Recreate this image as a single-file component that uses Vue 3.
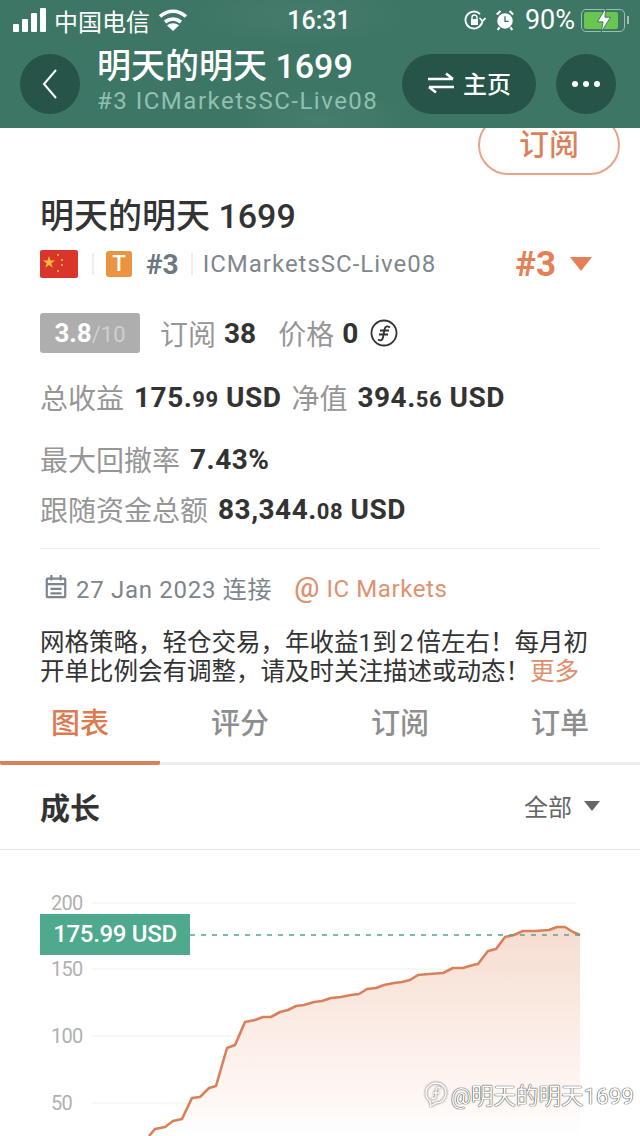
<script setup>
const tabs = ['图表', '评分', '订阅', '订单']
const pts = [[149,1136],[155,1129],[165,1127],[173,1121],[182,1119],[192,1098],[200,1097],[209,1088],[216,1086],[227,1048],[235,1045],[245,1022],[255,1020],[263,1017],[271,1017],[280,1012],[288,1010],[296,1006],[304,1005],[314,1002],[322,1001],[331,998],[341,997],[351,995],[359,994],[367,989],[376,988],[384,985],[394,983],[402,982],[410,980],[418,975],[429,974],[443,973],[453,968],[463,968],[473,965],[478,964],[488,951],[496,949],[505,937],[514,935],[523,931],[535,931],[549,930],[557,927],[565,927],[573,932],[580,935]]
const line = pts.map((p) => p.join(',')).join(' ')
const area = line + ' 580,1136 149,1136'
const ticks = [[903, '200'], [969, '150'], [1036, '100'], [1103, '50']]
</script>

<template>
  <div class="page">
    <header class="top">
      <div class="status">
        <div class="status-left">
          <span class="bars"><i></i><i></i><i></i><i></i></span>
          <span>中国电信</span>
          <svg width="30" height="24" viewBox="0 0 30 24" fill="none" stroke="#fff" stroke-width="3.6">
            <path d="M2 8.500c8-7 18-7 26 0M7 14c5-4 11-4 16 0"/>
            <path d="M15 23l-6-5.500c3.500-3 8.500-3 12 0z" fill="#fff" stroke="none"/>
          </svg>
        </div>
        <span class="clock">16:31</span>
        <div class="status-right">
          <svg width="22" height="20" viewBox="0 0 22 20" fill="none" stroke="#fff" stroke-width="1.800">
            <path d="M18.500 10a8.500 8.500 0 1 1-2.500-6"/>
            <path d="M21.500 8l-3 3-3-3" stroke-width="1.600"/>
            <rect x="7" y="9" width="7" height="6" fill="#fff" stroke="none"/>
            <path d="M8 9V7.500a2.500 2.500 0 0 1 5 0V9" stroke-width="1.400"/>
          </svg>
          <svg class="alarm" width="20" height="22" viewBox="0 0 22 24">
            <circle cx="11" cy="13" r="8.500" fill="#fff"/>
            <path d="M11 8v5.500h4" fill="none" stroke="#3d7565" stroke-width="1.500"/>
            <path d="M2 6l4-4M20 6l-4-4M5 20l-2 3M17 20l2 3" stroke="#fff" stroke-width="2.400"/>
          </svg>
          <span class="pct">90%</span>
          <span class="battery">
            <span class="battery-fill"></span>
            <svg class="bolt" width="20" height="26" viewBox="0 0 18 28">
              <path d="M11 1L2 16h6l-2 11 10-16h-6z" fill="#fff" stroke="#3d7565" stroke-width="1"/>
            </svg>
          </span>
        </div>
      </div>
      <div class="nav">
        <button class="round">
          <svg width="18" height="32" viewBox="0 0 18 32" fill="none" stroke="#fff" stroke-width="2">
            <path d="M15 2L3 16l12 14"/>
          </svg>
        </button>
        <div class="nav-title">
          <div class="nav-name">明天的明天 1699</div>
          <div class="nav-sub">#3 ICMarketsSC-Live08</div>
        </div>
        <button class="home">
          <svg width="28" height="22" viewBox="0 0 28 22" fill="none" stroke="#fff" stroke-width="2.600">
            <path d="M1 7h25M19 1.500L26 7M27 15H2M9 20.500L2 15"/>
          </svg>
          <span>主页</span>
        </button>
        <button class="round more"><i></i><i></i><i></i></button>
      </div>
    </header>

    <div class="sub-row"><button class="subscribe">订阅</button></div>

    <section class="info">
      <h1 class="name">明天的明天 1699</h1>
      <div class="tags">
        <svg class="flag" width="38" height="28" viewBox="0 0 38 28">
          <rect width="38" height="28" rx="2" fill="#d9352a"/>
          <path d="M9 6l1.500 4.500h4.500l-3.700 2.700 1.400 4.500L9 15l-3.700 2.700 1.400-4.500L3 10.500h4.500z" fill="#f5b93d"/>
          <circle cx="18" cy="5" r="1.100" fill="#f5b93d"/>
          <circle cx="22" cy="10" r="1.100" fill="#f5b93d"/>
          <circle cx="22" cy="15" r="1.100" fill="#f5b93d"/>
          <circle cx="18" cy="21" r="1.100" fill="#f5b93d"/>
        </svg>
        <span class="sep first"></span>
        <span class="t-badge">T</span>
        <span class="rank">#3</span>
        <span class="sep"></span>
        <span class="server">ICMarketsSC-Live08</span>
        <span class="rank-pick">#3<i class="caret"></i></span>
      </div>

      <div class="score-row">
        <span class="score"><b>3.8</b><small>/10</small></span>
        <span class="muted">订阅</span><b class="val">38</b>
        <span class="muted price">价格</span><b class="val">0</b>
        <svg class="coin" width="28" height="28" viewBox="0 0 28 28" fill="none" stroke="#333" stroke-width="1.800">
          <circle cx="14" cy="14" r="12.500"/>
          <path d="M20 8.500c-3-2-5-1-5.500 2L13 18.500c-.5 3-2.500 3.500-5 2M10 11.500h9M9 15.500h9"/>
        </svg>
      </div>

      <div class="stat-row totals">
        <span class="muted">总收益</span>
        <b class="val big">175.<small>99</small> USD</b>
        <span class="muted equity">净值</span>
        <b class="val big">394.<small>56</small> USD</b>
      </div>
      <div class="stat-row drawdown">
        <span class="muted">最大回撤率</span><b class="val big">7.43%</b>
      </div>
      <div class="stat-row funds">
        <span class="muted">跟随资金总额</span><b class="val big">83,344.<small>08</small> USD</b>
      </div>
    </section>

    <div class="rule"></div>

    <div class="meta">
      <svg width="24" height="24" viewBox="0 0 24 26" fill="none" stroke="#7d858c" stroke-width="2.400">
        <rect x="2" y="4" width="20" height="20" rx="1"/>
        <path d="M7 0v6M17 0v6M2 10h20M6 15h12M6 20h12"/>
      </svg>
      <span class="date">27 Jan 2023 连接</span>
      <span class="broker"><em>@</em> IC Markets</span>
    </div>

    <p class="desc">网格策略，轻仓交易，年收益1到<span class="thin">2</span>倍左右！每月初<br>开单比例会有调整，请及时关注描述或动态！<span class="more-link">更多</span></p>

    <nav class="tabs">
      <span v-for="(t, i) in tabs" :key="t" class="tab" :class="{ on: i === 0 }">{{ t }}</span>
    </nav>

    <div class="growth">
      <span class="growth-title">成长</span>
      <span class="range">全部<i class="caret grey"></i></span>
    </div>

    <div class="chart">
      <svg class="plot" width="640" height="286" viewBox="0 850 640 286">
        <defs>
          <linearGradient id="fade" x1="0" y1="0" x2="0" y2="1">
            <stop offset="0" stop-color="#f6dccf"/>
            <stop offset=".55" stop-color="#fcefe9"/>
            <stop offset=".85" stop-color="#fef8f5"/>
            <stop offset="1" stop-color="#fff"/>
          </linearGradient>
        </defs>
        <line v-for="t in ticks" :key="t[1]" x1="92" x2="576" :y1="t[0]" :y2="t[0]" stroke="#f5f5f5" stroke-width="1.500"/>
        <text v-for="t in ticks" :key="t[1] + 'l'" x="51" :y="t[0] + 7" class="tick">{{ t[1] }}</text>
        <polygon :points="area" fill="url(#fade)"/>
        <polyline :points="line" fill="none" stroke="#d9805a" stroke-width="2.600" stroke-linejoin="round"/>
        <line x1="190" x2="580" y1="935" y2="935" stroke="#4fa98d" stroke-width="1.600" stroke-dasharray="5 6"/>
      </svg>
      <span class="price-tag">175.99 USD</span>
    </div>

    <div class="watermark">
      <svg width="24" height="26" viewBox="0 0 24 26" fill="none" stroke="#fff" stroke-width="1.400">
        <path d="M6 20a10 10 0 1 1 6 2l-5 3z"/>
        <path d="M16 7c-2-1-4 0-4 3v5c0 2-2 3-4 2M9 12h6"/>
      </svg>
      <span>@明天的明天1699</span>
    </div>
  </div>
</template>

<style>
html, body { margin: 0; background: #fff; }
</style>

<style scoped>
.page {
  position: relative;
  width: 640px;
  height: 1136px;
  overflow: hidden;
  background: #fff;
  color: #333;
  font-family: "Roboto", "Noto Sans CJK SC", sans-serif;
}
button { border: 0; padding: 0; font: inherit; color: inherit; background: none; }
b { font-weight: 700; }

.top {
  position: relative;
  z-index: 2;
  height: 128px;
  background:
    radial-gradient(ellipse 90px 30px at 320px 120px, rgba(255, 255, 255, .05), transparent),
    radial-gradient(ellipse 110px 30px at 300px 15px, rgba(255, 255, 255, .04), transparent),
    #3e7666;
  color: #fff;
}
.status {
  display: flex;
  align-items: center;
  justify-content: space-between;
  height: 40px;
  padding: 0 15px 0 13px;
  font-size: 24px;
}
.status-left { display: flex; align-items: center; gap: 8px; width: 240px; }
.status-right { display: flex; align-items: center; width: 240px; justify-content: flex-end; }
.clock { font-weight: 500; font-size: 25px; }
.alarm { margin-left: 9px; }
.pct { margin: 0 6px 0 10px; font-size: 27px; }
.bars { display: flex; align-items: flex-end; gap: 3px; height: 24px; }
.bars i { display: block; width: 6px; background: #fff; border-radius: 1px; }
.bars i:nth-child(1) { height: 8px; }
.bars i:nth-child(2) { height: 13px; }
.bars i:nth-child(3) { height: 19px; }
.bars i:nth-child(4) { height: 24px; }
.battery {
  position: relative;
  display: block;
  width: 44px;
  height: 23px;
  border: 1.500px solid #9cc0ae;
  border-radius: 5px;
  box-sizing: border-box;
  padding: 2px;
}
.battery::after {
  content: "";
  position: absolute;
  right: -5px;
  top: 6px;
  width: 2px;
  height: 8px;
  background: #9cc0ae;
}
.battery-fill { display: block; height: 100%; width: 90%; background: #69c650; border-radius: 2px; }
.bolt { position: absolute; left: 12px; top: -3px; }

.nav {
  display: flex;
  align-items: center;
  height: 88px;
  padding: 0 24px 0 20px;
  box-sizing: border-box;
}
.round {
  display: flex;
  align-items: center;
  justify-content: center;
  flex: none;
  width: 60px;
  height: 60px;
  border-radius: 50%;
  background: #265449;
}
.nav-title { flex: 1; align-self: flex-start; margin-top: 7px; padding-left: 17px; white-space: nowrap; }
.nav-name { font-size: 34px; line-height: 38px; font-weight: 500; }
.nav-sub { margin-top: 2px; font-size: 24px; line-height: 28px; letter-spacing: 1.500px; color: #8fc0b0; }
.home {
  display: flex;
  align-items: center;
  justify-content: center;
  gap: 8px;
  flex: none;
  width: 134px;
  height: 60px;
  margin-right: 20px;
  padding-bottom: 3px;
  box-sizing: border-box;
  border-radius: 30px;
  background: #265449;
  font-size: 24px;
  font-weight: 500;
}
.more { gap: 5px; }
.more i { width: 6px; height: 6px; border-radius: 50%; background: #fff; }

.sub-row {
  display: flex;
  justify-content: flex-end;
  align-items: flex-end;
  height: 47px;
  padding-right: 20px;
}
.subscribe {
  width: 142px;
  height: 60px;
  flex: none;
  padding-bottom: 6px;
  border: 2px solid #e7a48a;
  border-radius: 30px;
  box-sizing: border-box;
  color: #dc7f5b;
  font-size: 30px;
  font-weight: 500;
  background: #fff;
}

.info { padding: 20px 40px 0; }
.name { margin: 0; font-size: 34px; line-height: 42px; font-weight: 500; color: #333; }
.tags { display: flex; align-items: center; height: 30px; margin-top: 12px; }
.sep { width: 2px; height: 22px; background: #eee; margin: 0 10px 0 12px; }
.sep.first { margin: 0 12px 0 14px; }
.t-badge {
  width: 26px;
  height: 26px;
  border-radius: 3px;
  background: #ea9442;
  color: #fff;
  text-align: center;
  font-size: 22px;
  line-height: 26px;
  font-weight: 500;
}
.rank { margin-left: 14px; font-size: 28px; font-weight: 700; color: #6c7780; }
.server { font-size: 24px; color: #7f878d; letter-spacing: 1px; }
.rank-pick {
  margin-left: auto;
  padding-right: 8px;
  display: flex;
  align-items: center;
  gap: 14px;
  font-size: 35px;
  font-weight: 700;
  color: #e57f55;
}
.caret {
  display: block;
  width: 0;
  height: 0;
  border-left: 11px solid transparent;
  border-right: 11px solid transparent;
  border-top: 14px solid #e57f55;
}
.caret.grey { border-left-width: 8px; border-right-width: 8px; border-top: 10px solid #666; }

.score-row { display: flex; align-items: center; height: 40px; margin-top: 34px; }
.score {
  width: 100px;
  height: 40px;
  margin-right: 20px;
  border-radius: 3px;
  background: #aeaeae;
  color: #fff;
  text-align: center;
  line-height: 40px;
  font-size: 26px;
}
.score small { font-size: 22px; color: #cfcfcf; }
.muted { color: #969696; font-size: 28px; font-weight: 400; }
.val { font-size: 28px; font-weight: 700; margin-left: 8px; color: #333; }
.price { margin-left: 22px; }
.coin { margin-left: 12px; }

.stat-row { display: flex; align-items: center; height: 40px; white-space: pre; }
.totals { margin-top: 24px; }
.equity { margin-left: 10px; }
.val.big { margin-left: 10px; letter-spacing: .5px; }
.val small { font-size: 22px; }
.drawdown { margin-top: 22px; }
.funds { margin-top: 10px; }

.rule { height: 1px; margin: 19px 40px 0; background: #eee; }

.meta { display: flex; align-items: center; gap: 8px; height: 30px; margin: 23px 0 0 44px; color: #7d858c; font-size: 24px; }
.date { letter-spacing: .7px; }
.broker { margin-left: 14px; color: #dd9270; letter-spacing: .6px; }
.broker em { font-style: normal; font-size: 28px; font-weight: 500; }

.desc { margin: 26px 0 0 40px; font-size: 24.500px; line-height: 29px; color: #333; white-space: nowrap; }
.thin { margin: 0 3px; }
.more-link { color: #e08f6c; }

.tabs {
  display: grid;
  grid-template-columns: repeat(4, 160px);
  height: 69px;
  margin-top: 10px;
  border-bottom: 3px solid #eee;
  box-sizing: border-box;
}
.tab { text-align: center; font-size: 29px; line-height: 56px; color: #8e8e8e; font-weight: 500; }
.tab.on { color: #dd7a50; border-bottom: 4px solid #d9805a; height: 69px; box-sizing: border-box; border-radius: 2px; }

.growth {
  display: flex;
  align-items: center;
  justify-content: space-between;
  height: 85px;
  padding: 0 40px 3px;
  box-sizing: border-box;
  border-bottom: 1px solid #e6e6e6;
}
.growth-title { font-size: 30px; font-weight: 700; }
.range { display: flex; align-items: center; gap: 12px; color: #666; font-size: 24px; }

.chart { position: relative; height: 286px; }
.plot { display: block; }
.tick { font-size: 20px; fill: #b0b0b0; letter-spacing: -.8px; font-family: "Roboto", sans-serif; }
.price-tag {
  position: absolute;
  left: 40px;
  top: 64px;
  width: 150px;
  height: 41px;
  background: #4fa98d;
  color: #fff;
  text-align: center;
  font-size: 24px;
  line-height: 41px;
  font-weight: 500;
  letter-spacing: -.3px;
}
.watermark {
  position: absolute;
  right: 6px;
  bottom: 26px;
  display: flex;
  align-items: center;
  gap: 3px;
  color: #fff;
  font-size: 22.500px;
  text-shadow: 0 0 1px #222, 0 0 1px #222;
}
.watermark svg { filter: drop-shadow(0 0 1px #444); }
</style>
